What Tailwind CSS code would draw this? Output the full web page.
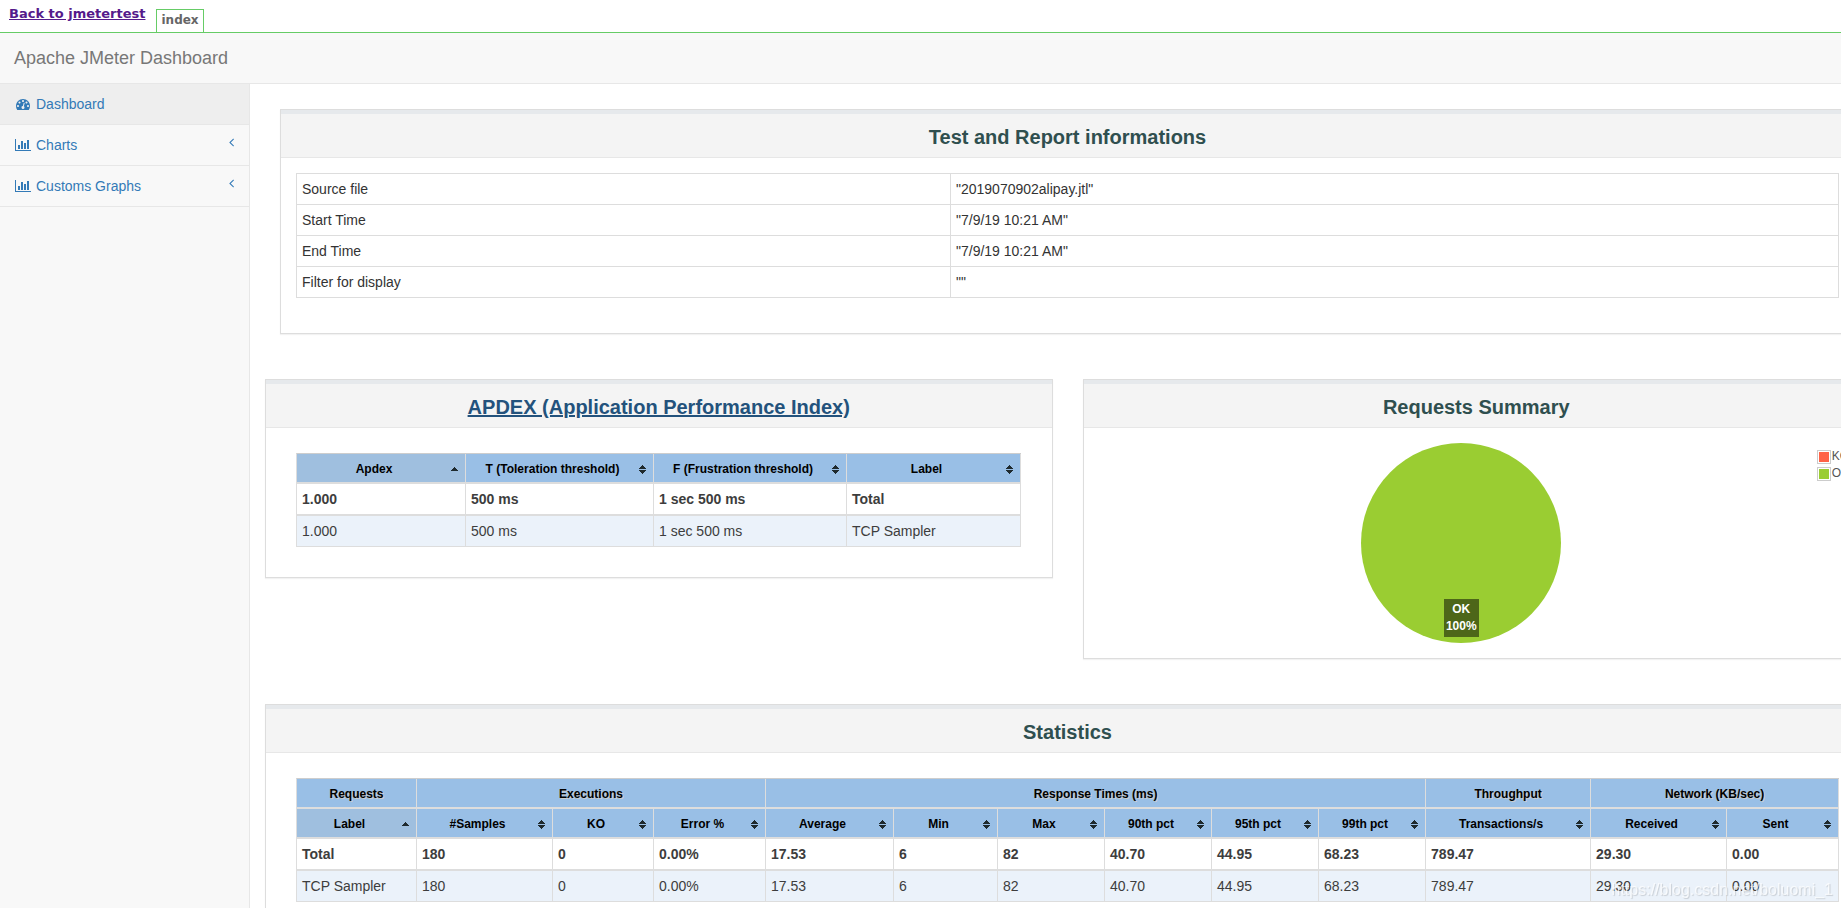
<!DOCTYPE html>
<html lang="en">
<head>
<meta charset="utf-8">
<title>Apache JMeter Dashboard</title>
<script src="https://cdn.jsdelivr.net/npm/@tailwindcss/browser@4"></script>
</head>
<body class="relative flex min-h-screen flex-col overflow-hidden bg-white font-['Liberation_Sans',Arial,sans-serif] text-sm leading-5 text-[#333]">

<!-- Shared symbols -->
<svg class="hidden">
  <symbol id="gauge" viewBox="0 0 1792 1792"><path d="M384 1152q0-53-37.5-90.5t-90.5-37.5-90.5 37.5-37.5 90.5 37.5 90.5 90.5 37.5 90.5-37.5 37.5-90.5zm192-448q0-53-37.5-90.5t-90.5-37.5-90.5 37.5-37.5 90.5 37.5 90.5 90.5 37.5 90.5-37.5 37.5-90.5zm428 481l101-382q6-26-7.5-48.5t-38.5-29.5-48 6.5-30 39.5l-101 382q-60 5-107 43.5t-63 98.5q-20 77 20 146t117 89 146-20 89-117q16-60-6-117t-72-91zm660-33q0-53-37.5-90.5t-90.5-37.5-90.5 37.5-37.5 90.5 37.5 90.5 90.5 37.5 90.5-37.5 37.5-90.5zm-640-640q0-53-37.5-90.5t-90.5-37.5-90.5 37.5-37.5 90.5 37.5 90.5 90.5 37.5 90.5-37.5 37.5-90.5zm448 192q0-53-37.5-90.5t-90.5-37.5-90.5 37.5-37.5 90.5 37.5 90.5 90.5 37.5 90.5-37.5 37.5-90.5zm320 448q0 261-141 483-19 29-54 29h-1402q-35 0-54-29-141-221-141-483 0-182 71-348t191-286 286-191 348-71 348 71 286 191 191 286 71 348z"/></symbol>
  <symbol id="bars" viewBox="0 0 2048 1792"><path d="M640 896v512h-256v-512h256zm384-512v1024h-256v-1024h256zm1024 1152v128h-2048v-1536h128v1408h1920zm-640-896v768h-256v-768h256zm384-384v1152h-256v-1152h256z"/></symbol>
  <symbol id="angle" viewBox="576 256 640 1280"><path d="M1203 544q0 13-10 23l-393 393 393 393q10 10 10 23t-10 23l-50 50q-10 10-23 10t-23-10l-466-466q-10-10-10-23t10-23l466-466q10-10 23-10t23 10l50 50q10 10 10 23z"/></symbol>
  <symbol id="both" viewBox="0 0 7 9"><path d="M3 0h1v1h1v1h1v1h1v1H0V3h1V2h1V1h1zM0 5h7v1H6v1H5v1H4v1H3V8H2V7H1V6H0z"/></symbol>
  <symbol id="asc" viewBox="0 0 7 9"><path d="M3 2h1v1h1v1h1v1h1v1H0V5h1V4h1V3h1z"/></symbol>
</svg>

<header class="flex h-[33px] shrink-0 border-b border-[#66cc66] pl-[9px] font-['DejaVu_Sans',Verdana,sans-serif] text-xs leading-5 font-bold">
  <a href="#" class="mt-1 mr-[11px] self-start text-[13px] text-[#551a8b] underline">Back to jmetertest</a>
  <a href="#" class="mt-[9px] border border-b-0 border-[#66cc66] px-1 text-[#666]">index</a>
</header>

<nav class="flex h-[51px] shrink-0 items-center border-b border-[#e7e7e7] bg-[#f8f8f8] px-3.5">
  <a href="#" class="text-lg leading-5 text-[#777]">Apache JMeter Dashboard</a>
</nav>

<div class="flex flex-1">
  <aside class="w-[250px] shrink-0 border-r border-[#e7e7e7] bg-[#f8f8f8]">
    <ul class="text-[#337ab7]">
      <li class="border-b border-[#e7e7e7] bg-[#eee]"><a href="#" class="flex items-center gap-1 px-3.5 py-2.5"><span class="flex w-[18px] justify-center"><svg class="h-3.5 w-3.5 fill-current"><use href="#gauge"/></svg></span>Dashboard</a></li>
      <li class="border-b border-[#e7e7e7]"><a href="#" class="flex items-center gap-1 px-3.5 py-2.5"><span class="flex w-[18px] justify-center"><svg class="h-3.5 w-4 fill-current"><use href="#bars"/></svg></span>Charts<svg class="mb-1.5 ml-auto h-2.5 w-[7px] fill-current"><use href="#angle"/></svg></a></li>
      <li class="border-b border-[#e7e7e7]"><a href="#" class="flex items-center gap-1 px-3.5 py-2.5"><span class="flex w-[18px] justify-center"><svg class="h-3.5 w-4 fill-current"><use href="#bars"/></svg></span>Customs Graphs<svg class="mb-1.5 ml-auto h-2.5 w-[7px] fill-current"><use href="#angle"/></svg></a></li>
    </ul>
  </aside>

  <!-- The report is a little wider than the window and runs off its right edge -->
  <main class="-mr-11 flex min-w-0 flex-1 flex-col gap-[45px] px-[15px] pt-[25px]">

    <section class="mx-[15px] border border-[#ddd] px-0 pb-[35px] shadow-[0_1px_1px_rgba(0,0,0,0.05)]">
      <h2 class="border-t-4 border-b border-t-[#e6e9ec] border-b-[#e7e7e7] bg-[#f4f4f4] pt-[11px] pb-[7px] text-center text-xl leading-[25px] font-bold text-[#2f4f4f]">Test and Report informations</h2>
      <div class="px-[15px] pt-[15px]">
        <table class="w-full table-fixed border-separate border-spacing-0 border-t border-l border-[#ddd] [&_td]:border-r [&_td]:border-b [&_td]:border-[#ddd] [&_td]:p-[5px]">
          <colgroup><col class="w-[654px]"><col class="w-[888px]"></colgroup>
          <tbody>
            <tr><td>Source file</td><td>"2019070902alipay.jtl"</td></tr>
            <tr><td>Start Time</td><td>"7/9/19 10:21 AM"</td></tr>
            <tr><td>End Time</td><td>"7/9/19 10:21 AM"</td></tr>
            <tr><td>Filter for display</td><td>""</td></tr>
          </tbody>
        </table>
      </div>
    </section>

    <div class="grid grid-cols-2 items-start gap-[30px]">
      <section class="border border-[#ddd] pb-[30px] shadow-[0_1px_1px_rgba(0,0,0,0.05)]">
        <h2 class="border-t-4 border-b border-t-[#e6e9ec] border-b-[#e7e7e7] bg-[#f4f4f4] pt-[11px] pb-[7px] text-center text-xl leading-[25px] font-bold"><a href="#" class="text-[#23527c] underline">APDEX (Application Performance Index)</a></h2>
        <div class="pt-[25px] pr-[31px] pl-[30px]">
          <table class="w-full table-fixed border-separate border-spacing-0 border-t border-l border-t-[#cdcdcd] border-l-[#ddd] text-[#3d3d3d] [&_button]:flex [&_button]:w-full [&_button]:items-center [&_button]:pt-[5px] [&_button]:pr-[7px] [&_button]:pb-[3px] [&_span]:flex-1 [&_svg]:h-[9px] [&_svg]:w-[7px] [&_svg]:fill-[#1f2a2e] [&_td]:border-r [&_td]:border-b-2 [&_td]:border-[#ddd] [&_td]:p-[5px] [&_th]:border-r [&_th]:border-b-2 [&_th]:border-[#ddd] [&_th]:bg-[#99bfe6] [&_th]:text-xs [&_th]:leading-5 [&_th]:font-bold [&_th]:text-black [&_th]:text-shadow-[1px_1px_0_#cccccc]">
            <colgroup><col class="w-[169px]"><col class="w-[188px]"><col class="w-[193px]"><col class="w-[174px]"></colgroup>
            <thead>
              <tr>
                <th class="bg-[#9fbfdf]!"><button><span>Apdex</span><svg><use href="#asc"/></svg></button></th>
                <th><button><span>T (Toleration threshold)</span><svg><use href="#both"/></svg></button></th>
                <th><button><span>F (Frustration threshold)</span><svg><use href="#both"/></svg></button></th>
                <th><button><span>Label</span><svg><use href="#both"/></svg></button></th>
              </tr>
            </thead>
            <tbody>
              <tr class="font-bold"><td>1.000</td><td>500 ms</td><td>1 sec 500 ms</td><td>Total</td></tr>
              <tr class="bg-[#ebf2fa] [&>td]:border-b!"><td>1.000</td><td>500 ms</td><td>1 sec 500 ms</td><td>TCP Sampler</td></tr>
            </tbody>
          </table>
        </div>
      </section>

      <section class="border border-[#ddd] shadow-[0_1px_1px_rgba(0,0,0,0.05)]">
        <h2 class="border-t-4 border-b border-t-[#e6e9ec] border-b-[#e7e7e7] bg-[#f4f4f4] pt-[11px] pb-[7px] text-center text-xl leading-[25px] font-bold text-[#2f4f4f]">Requests Summary</h2>
        <div class="relative flex justify-center py-[15px] pr-[30px]">
          <div class="flex h-[200px] w-[200px] items-end justify-center rounded-full bg-[#9acd32] pb-1.5">
            <div class="bg-black/50 px-0.5 py-0.5 text-center text-xs leading-[17px] font-bold text-white">OK<br>100%</div>
          </div>
          <ul class="absolute top-5 right-5 text-xs leading-[17px] text-[#545454]">
            <li class="flex items-center gap-px"><i class="block h-3.5 w-3.5 border border-[#ccc] bg-[#ff6347] bg-clip-content p-px"></i>KO</li>
            <li class="flex items-center gap-px"><i class="block h-3.5 w-3.5 border border-[#ccc] bg-[#9acd32] bg-clip-content p-px"></i>OK</li>
          </ul>
        </div>
      </section>
    </div>

    <section class="border border-[#ddd] pb-[30px] shadow-[0_1px_1px_rgba(0,0,0,0.05)]">
      <h2 class="border-t-4 border-b border-t-[#e6e9ec] border-b-[#e7e7e7] bg-[#f4f4f4] pt-[11px] pb-[7px] text-center text-xl leading-[25px] font-bold text-[#2f4f4f]">Statistics</h2>
      <div class="px-[30px] pt-[25px]">
        <table class="w-full table-fixed border-separate border-spacing-0 border-t border-l border-t-[#cdcdcd] border-l-[#ddd] text-[#3d3d3d] [&_button]:flex [&_button]:w-full [&_button]:items-center [&_button]:pt-[5px] [&_button]:pr-[7px] [&_button]:pb-[3px] [&_span]:flex-1 [&_svg]:h-[9px] [&_svg]:w-[7px] [&_svg]:fill-[#1f2a2e] [&_td]:border-r [&_td]:border-b-2 [&_td]:border-[#ddd] [&_td]:p-[5px] [&_th]:border-r [&_th]:border-b-2 [&_th]:border-[#ddd] [&_th]:bg-[#99bfe6] [&_th]:text-xs [&_th]:leading-5 [&_th]:font-bold [&_th]:text-black [&_th]:text-shadow-[1px_1px_0_#cccccc]">
          <colgroup><col class="w-[120px]"><col class="w-[136px]"><col class="w-[101px]"><col class="w-[112px]"><col class="w-[128px]"><col class="w-[104px]"><col class="w-[107px]"><col class="w-[107px]"><col class="w-[107px]"><col class="w-[107px]"><col class="w-[165px]"><col class="w-[136px]"><col class="w-[112px]"></colgroup>
          <thead>
            <tr class="[&>th]:pt-[5px] [&>th]:pb-[3px]">
              <th>Requests</th><th colspan="3">Executions</th><th colspan="6">Response Times (ms)</th><th>Throughput</th><th colspan="2">Network (KB/sec)</th>
            </tr>
            <tr>
              <th class="bg-[#9fbfdf]!"><button><span>Label</span><svg><use href="#asc"/></svg></button></th>
              <th><button><span>#Samples</span><svg><use href="#both"/></svg></button></th>
              <th><button><span>KO</span><svg><use href="#both"/></svg></button></th>
              <th><button><span>Error %</span><svg><use href="#both"/></svg></button></th>
              <th><button><span>Average</span><svg><use href="#both"/></svg></button></th>
              <th><button><span>Min</span><svg><use href="#both"/></svg></button></th>
              <th><button><span>Max</span><svg><use href="#both"/></svg></button></th>
              <th><button><span>90th pct</span><svg><use href="#both"/></svg></button></th>
              <th><button><span>95th pct</span><svg><use href="#both"/></svg></button></th>
              <th><button><span>99th pct</span><svg><use href="#both"/></svg></button></th>
              <th><button><span>Transactions/s</span><svg><use href="#both"/></svg></button></th>
              <th><button><span>Received</span><svg><use href="#both"/></svg></button></th>
              <th><button><span>Sent</span><svg><use href="#both"/></svg></button></th>
            </tr>
          </thead>
          <tbody>
            <tr class="font-bold"><td>Total</td><td>180</td><td>0</td><td>0.00%</td><td>17.53</td><td>6</td><td>82</td><td>40.70</td><td>44.95</td><td>68.23</td><td>789.47</td><td>29.30</td><td>0.00</td></tr>
            <tr class="bg-[#ebf2fa] [&>td]:border-b!"><td>TCP Sampler</td><td>180</td><td>0</td><td>0.00%</td><td>17.53</td><td>6</td><td>82</td><td>40.70</td><td>44.95</td><td>68.23</td><td>789.47</td><td>29.30</td><td>0.00</td></tr>
          </tbody>
        </table>
      </div>
    </section>
  </main>
</div>

<div class="pointer-events-none fixed right-2 bottom-2 text-base leading-5 text-white/70 text-shadow-[1px_1px_1px_rgba(0,0,0,0.15)]">https://blog.csdn.net/boluomi_1</div>
</body>
</html>
